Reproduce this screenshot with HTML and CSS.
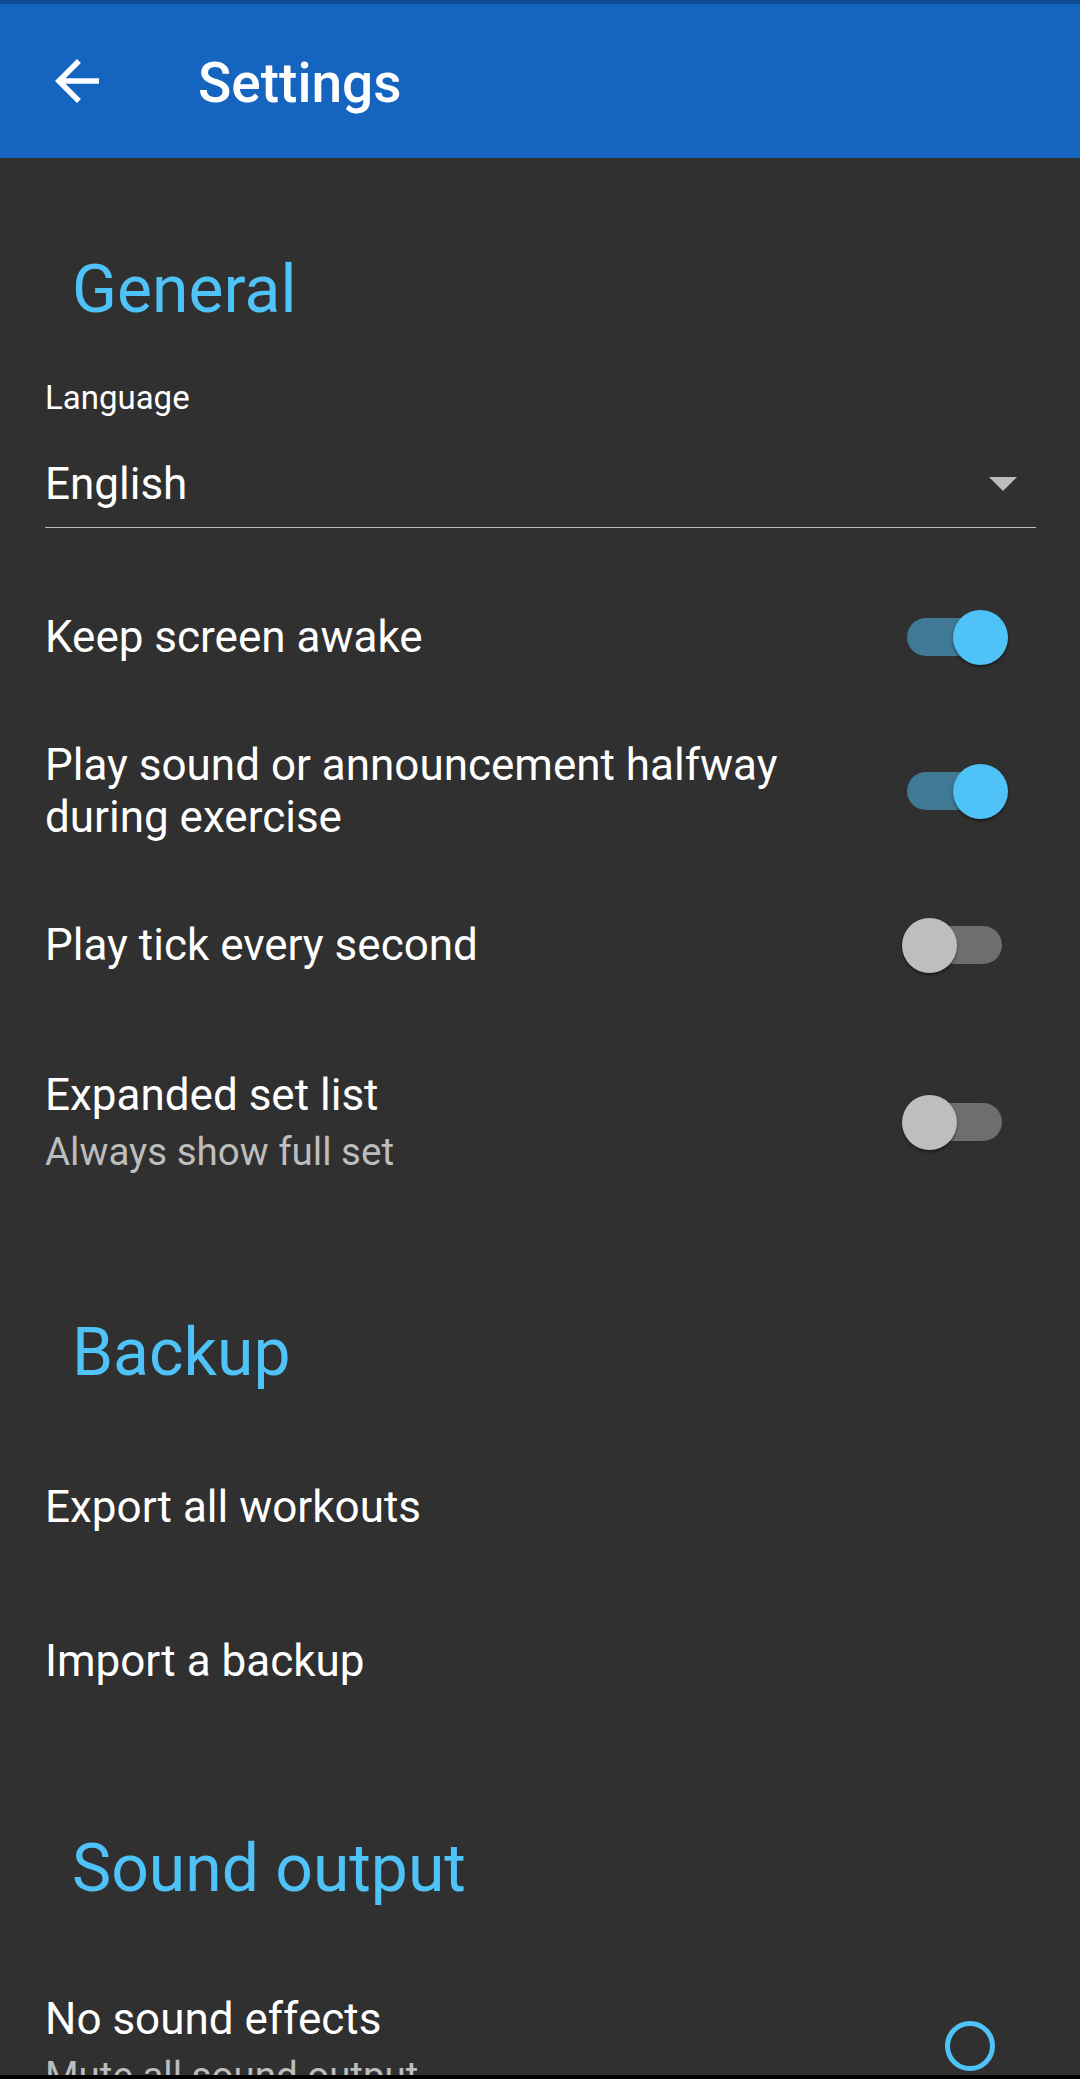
FILE: index.html
```html
<!DOCTYPE html>
<html lang="en">
<head>
<meta charset="utf-8">
<title>Settings</title>
<link rel="stylesheet" href="styles.css">
</head>
<body>
<div class="screen">
  <div class="statusbar"></div>
  <header class="appbar">
    <button class="back" aria-label="Back">
      <svg viewBox="0 0 24 24" width="66" height="66"><path fill="#fff" d="M20 11H7.83l5.59-5.59L12 4l-8 8 8 8 1.41-1.41L7.83 13H20v-2z"/></svg>
    </button>
    <h1 class="title">Settings</h1>
  </header>
  <main class="content">
    <section class="section">
      <h2 class="section-title">General</h2>
      <div class="field">
        <div class="field-label">Language</div>
        <div class="select">
          <span class="select-value">English</span>
          <span class="caret"></span>
        </div>
      </div>
      <div class="tile">
        <div class="tile-text"><div class="tile-title">Keep screen awake</div></div>
        <span class="switch on"><span class="track"></span><span class="thumb"></span></span>
      </div>
      <div class="tile">
        <div class="tile-text"><div class="tile-title">Play sound or announcement halfway during exercise</div></div>
        <span class="switch on"><span class="track"></span><span class="thumb"></span></span>
      </div>
      <div class="tile">
        <div class="tile-text"><div class="tile-title">Play tick every second</div></div>
        <span class="switch"><span class="track"></span><span class="thumb"></span></span>
      </div>
      <div class="tile tile-tall">
        <div class="tile-text">
          <div class="tile-title">Expanded set list</div>
          <div class="tile-sub">Always show full set</div>
        </div>
        <span class="switch"><span class="track"></span><span class="thumb"></span></span>
      </div>
    </section>
    <section class="section">
      <h2 class="section-title">Backup</h2>
      <div class="tile">
        <div class="tile-text"><div class="tile-title">Export all workouts</div></div>
      </div>
      <div class="tile">
        <div class="tile-text"><div class="tile-title">Import a backup</div></div>
      </div>
    </section>
    <section class="section">
      <h2 class="section-title">Sound output</h2>
      <div class="tile tile-tall">
        <div class="tile-text">
          <div class="tile-title">No sound effects</div>
          <div class="tile-sub">Mute all sound output</div>
        </div>
        <span class="radio"></span>
      </div>
    </section>
  </main>
  <div class="navedge"></div>
</div>
</body>
</html>
```

FILE: styles.css
```css
* { box-sizing: border-box; }

html, body {
  margin: 0;
  padding: 0;
  background: #303030;
}

body {
  font-family: Roboto, "Noto Sans", "Liberation Sans", sans-serif;
  color: #ffffff;
  height: 2079px;
  overflow: hidden;
}

.screen {
  width: 1080px;
  height: 2079px;
  overflow: hidden;
}

.statusbar {
  height: 4px;
  background: #0f4b97;
}

.appbar {
  height: 154px;
  background: #1565c0;
  display: flex;
  align-items: center;
}

.back {
  width: 66px;
  height: 66px;
  margin: 0 0 0 44px;
  padding: 0;
  border: 0;
  background: none;
  display: flex;
  flex: none;
}

.back svg { display: block; }

.title {
  margin: 0 0 0 88px;
  padding-top: 4px;
  font-size: 55px;
  font-weight: 500;
  line-height: 64px;
  color: #ffffff;
}

.content {
  padding-top: 1px;
}

.section-title {
  margin: 91px 0 37px 72px;
  font-size: 66px;
  font-weight: 400;
  line-height: 80px;
  color: #4fc3f7;
}

.field {
  margin: 0 44px 32px 45px;
  padding-top: 11px;
  border-bottom: 1px solid #bdbdbd;
}

.field-label {
  font-size: 33px;
  line-height: 40px;
  color: #ffffff;
}

.select {
  margin-top: 40px;
  padding-bottom: 17px;
  display: flex;
  align-items: center;
}

.select-value {
  flex: 1;
  font-size: 44px;
  line-height: 52px;
}

.caret {
  width: 0;
  height: 0;
  margin-right: 19px;
  border-left: 14px solid transparent;
  border-right: 14px solid transparent;
  border-top: 14px solid #bdbdbd;
}

.tile {
  height: 154px;
  padding: 0 72px 0 45px;
  display: flex;
  align-items: center;
  gap: 40px;
}

.tile-tall {
  height: 200px;
}

.tile-text {
  flex: 1;
  min-width: 0;
}

.tile-title {
  font-size: 44px;
  line-height: 52px;
  color: #ffffff;
}

.tile-sub {
  margin-top: 8px;
  font-size: 38.5px;
  line-height: 46px;
  color: #bdbdbd;
}

.switch {
  position: relative;
  flex: none;
  width: 106px;
  height: 55px;
}

.track {
  position: absolute;
  left: 5px;
  right: 6px;
  top: 8.5px;
  height: 38px;
  border-radius: 19px;
  background: #6e6e6e;
}

.thumb {
  position: absolute;
  top: 0;
  left: 0;
  width: 55px;
  height: 55px;
  border-radius: 50%;
  background: #bebebe;
  box-shadow: 0 2px 3px rgba(0, 0, 0, 0.45);
}

.switch.on .track {
  background: #3f7993;
}

.switch.on .thumb {
  left: 51px;
  background: #4fc3f7;
}

.radio {
  flex: none;
  width: 50px;
  height: 50px;
  margin-right: 13px;
  border: 5.5px solid #4fc3f7;
  border-radius: 50%;
}

.navedge {
  position: fixed;
  left: 0;
  right: 0;
  bottom: 0;
  height: 4px;
  background: #000000;
}
```
